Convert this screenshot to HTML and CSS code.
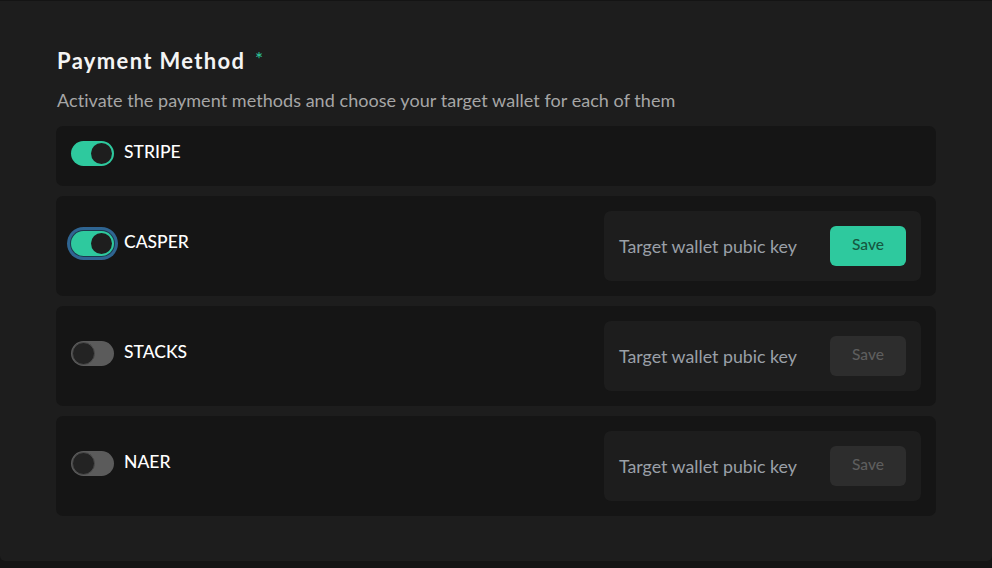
FILE: index.html
```html
<!DOCTYPE html>
<html lang="en">
<head>
<meta charset="utf-8">
<title>Payment Method</title>
<link rel="stylesheet" href="styles.css">
</head>
<body>
<div class="panel">
  <h2 class="title">Payment Method <span class="req">*</span></h2>
  <p class="subtitle">Activate the payment methods and choose your target wallet for each of them</p>
  <div class="methods">
    <div class="method method-short">
      <div class="switch-group">
        <span class="switch on"><span class="knob"></span></span>
        <span class="label">STRIPE</span>
      </div>
    </div>
    <div class="method">
      <div class="switch-group">
        <span class="switch on focus"><span class="knob"></span></span>
        <span class="label">CASPER</span>
      </div>
      <div class="wallet">
        <span class="placeholder">Target wallet pubic key</span>
        <button class="save">Save</button>
      </div>
    </div>
    <div class="method">
      <div class="switch-group">
        <span class="switch"><span class="knob"></span></span>
        <span class="label">STACKS</span>
      </div>
      <div class="wallet">
        <span class="placeholder">Target wallet pubic key</span>
        <button class="save" disabled>Save</button>
      </div>
    </div>
    <div class="method">
      <div class="switch-group">
        <span class="switch"><span class="knob"></span></span>
        <span class="label">NAER</span>
      </div>
      <div class="wallet">
        <span class="placeholder">Target wallet pubic key</span>
        <button class="save" disabled>Save</button>
      </div>
    </div>
  </div>
</div>
</body>
</html>
```

FILE: styles.css
```css
* { box-sizing: border-box; }
html, body {
  margin: 0;
  padding: 0;
  background: #141414;
}
body {
  padding-top: 1px;
  font-family: Lato, "Noto Sans", sans-serif;
}
.panel {
  background: #1d1d1d;
  height: 560px;
  border-radius: 0 0 5px 5px;
  padding: 45px 56px 0 56px;
}
.title {
  margin: 0 0 0 1px;
  font-size: 22px;
  line-height: 30px;
  font-weight: 700;
  color: #f4f4f4;
  letter-spacing: 1.35px;
}
.req {
  color: #2ec99e;
  font-size: 19px;
  font-weight: 400;
  margin-left: 3px;
  position: relative;
  top: -3px;
}
.subtitle {
  margin: 11px 0 14px 1px;
  font-size: 18px;
  line-height: 24px;
  color: #a6a6a6;
  letter-spacing: 0.05px;
}
.methods {
  display: flex;
  flex-direction: column;
  gap: 10px;
}
.method {
  background: #151515;
  border-radius: 7px;
  padding: 15px;
  display: flex;
  align-items: center;
  justify-content: space-between;
  height: 100px;
}
.method-short {
  height: 60px;
}
.switch-group {
  display: flex;
  align-items: flex-start;
  gap: 10px;
  height: 30px;
}
.label {
  color: #ffffff;
  font-size: 17.5px;
  line-height: 24px;
  font-weight: 500;
  margin-top: -1px;
}
.switch {
  position: relative;
  display: block;
  width: 43px;
  height: 25px;
  border-radius: 13px;
  background: #5b5b5b;
  flex: none;
}
.switch .knob {
  position: absolute;
  left: 1px;
  top: 1px;
  width: 23px;
  height: 23px;
  border-radius: 50%;
  background: #232323;
  border: 1px solid #4c4c4c;
}
.switch.on {
  background: #2ec99e;
}
.switch.on .knob {
  left: auto;
  right: 2px;
  top: 2px;
  width: 21px;
  height: 21px;
  background: #1e1e1e;
  border: none;
}
.switch.focus {
  box-shadow: 0 0 0 1px #1d3a4e, 0 0 0 4px #2f6592;
}
.wallet {
  width: 317px;
  height: 70px;
  background: #1d1d1d;
  border-radius: 7px;
  display: flex;
  align-items: center;
  justify-content: space-between;
  padding: 0 15px;
}
.placeholder {
  font-size: 17.8px;
  color: #9aa0a8;
}
.save {
  width: 76px;
  height: 40px;
  border: none;
  border-radius: 6px;
  background: #2ec99e;
  color: #16573f;
  font-family: Lato, "Noto Sans", sans-serif;
  font-size: 15.5px;
  font-weight: 500;
  padding: 0 0 4px;
}
.save:disabled {
  background: #2d2d2d;
  color: #5e5e5e;
}
```
